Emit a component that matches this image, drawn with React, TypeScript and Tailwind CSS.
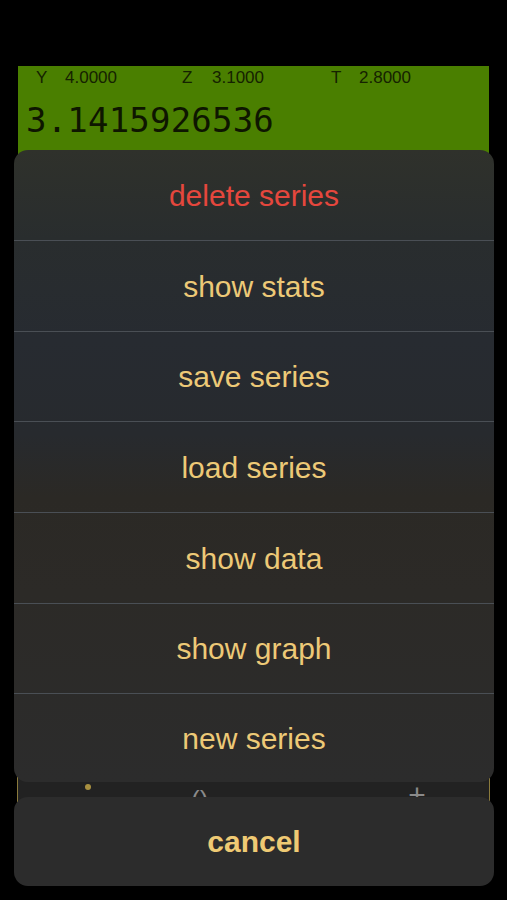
import React from "react";

const items = [
  { label: "delete series", red: true, h: "h-[90px]" },
  { label: "show stats", h: "h-[91px]" },
  { label: "save series", h: "h-[90px]" },
  { label: "load series", h: "h-[91px]" },
  { label: "show data", h: "h-[91px]" },
  { label: "show graph", h: "h-[90px]" },
  { label: "new series", h: "h-[89px]" },
];

export default function App() {
  return (
    <div className="relative h-[900px] w-[507px] overflow-hidden bg-black">
      {/* calculator underneath */}
      <div className="pt-[66px]">
        <div className="mx-[18px] h-[92px] w-[471px] bg-[#4a7f00]">
          <div className="flex h-[24px] items-center pl-[18px] font-['Liberation_Sans',sans-serif] text-[17px] text-[#152200]">
            <div className="flex w-[146px] items-center">
              <span className="w-[29px]">Y</span>
              <span>4.0000</span>
            </div>
            <div className="flex w-[149px] items-center">
              <span className="w-[30px]">Z</span>
              <span>3.1000</span>
            </div>
            <div className="flex items-center">
              <span className="w-[28px]">T</span>
              <span>2.8000</span>
            </div>
          </div>
          <div className="pl-[8px] pt-[13px] font-['DejaVu_Sans_Mono',monospace] text-[34px] leading-[34px] tracking-[0.2px] text-[#0e1600]">
            3.1415926536
          </div>
        </div>
        {/* keyboard area (mostly hidden) */}
        <div className="mx-[17px] flex h-[645px] flex-col justify-end border-x border-[#8a7a3c] bg-[#222222]">
          <div className="relative flex h-[28px] items-start font-['Liberation_Sans',sans-serif]">
            <span className="ml-[67px] mt-[9px] h-[6px] w-[6px] rounded-full bg-[#a89040]" />
            <span className="ml-[100px] mt-[12px] text-[26px] leading-[26px] text-[#8a8a8a]">()</span>
            <span className="ml-[200px] mt-[5px] text-[30px] leading-[30px] text-[#8a8a8a]">+</span>
          </div>
        </div>
      </div>

      {/* action sheet overlay */}
      <div className="absolute left-[14px] top-[150px] flex w-[480px] flex-col gap-[15px]">
        <div className="overflow-hidden rounded-[14px] bg-[linear-gradient(180deg,#2f312b_0%,#292d2e_14%,#272b31_30%,#272a2e_45%,#2b2925_55%,#2c2a27_70%,#2c2c2c_100%)]">
          {items.map((it, i) => (
            <div
              key={it.label}
              className={`flex ${it.h} items-center justify-center font-['Liberation_Sans',sans-serif] text-[30px] ${
                i > 0 ? "border-t border-[#4a4f55]" : ""
              } ${it.red ? "text-[#e5473d]" : "text-[#edc977]"}`}
            >
              {it.label}
            </div>
          ))}
        </div>
        <div className="flex h-[89px] items-center justify-center rounded-[14px] bg-[#2c2c2c] font-['Liberation_Sans',sans-serif] text-[30px] font-bold text-[#efca74]">
          cancel
        </div>
      </div>
    </div>
  );
}
